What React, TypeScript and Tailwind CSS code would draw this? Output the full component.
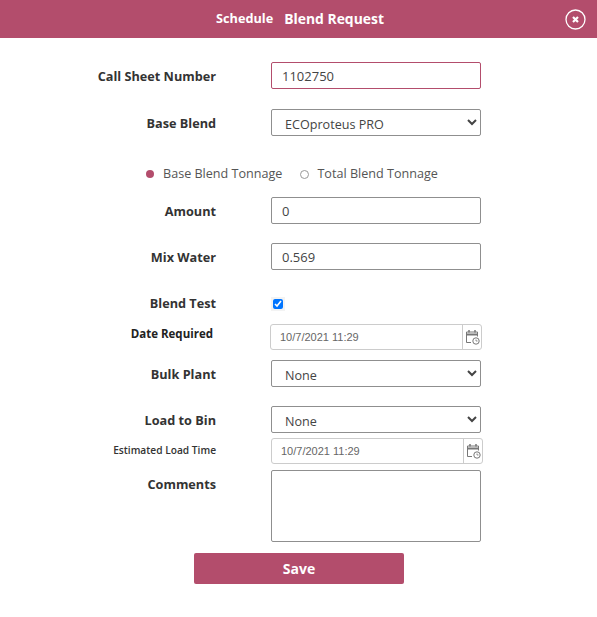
const font = "font-['Open_Sans','Noto_Sans',sans-serif]";

const CalendarIcon = () => (
  <svg width="15" height="16" viewBox="0 0 15 16" fill="none" stroke="#777" strokeWidth="1">
    <path d="M6 13.5H1.5V3H12.5V7.5" />
    <path d="M1.5 5.5H12.5" strokeWidth="2" />
    <path d="M4 1V3.5M10 1V3.5" strokeWidth="1.5" />
    <circle cx="11" cy="12" r="3.2" />
    <path d="M11 10.5V12H12.5" strokeWidth="0.8" />
  </svg>
);

const Label = ({ children, className = "" }: { children: React.ReactNode; className?: string }) => (
  <div className={`w-[216px] shrink-0 pt-[2px] text-right text-[12.7px] font-bold text-[#333] ${className}`}>{children}</div>
);

const TextBox = ({ value, className = "" }: { value: string; className?: string }) => (
  <input
    readOnly
    value={value}
    className={`ml-[55px] h-[27px] w-[210px] rounded-[2px] border border-[#8f8f8f] bg-white pl-[10px] pt-[1px] text-[13px] text-[#444] outline-none ${className}`}
  />
);

const Select = ({ value }: { value: string }) => (
  <select
    defaultValue={value}
    className="ml-[55px] h-[27px] w-[210px] rounded-[2px] border border-[#8f8f8f] bg-white pl-[9px] pt-[3px] text-[12.6px] text-[#444] outline-none"
  >
    <option>{value}</option>
  </select>
);

const DateBox = ({ value, className = "" }: { value: string; className?: string }) => (
  <div className={`flex h-[26px] w-[212px] rounded-[3px] border border-[#ccc] bg-white ${className}`}>
    <div className="flex-1 pl-[9px] font-['Liberation_Sans',sans-serif] text-[11px] leading-[25px] text-[#666]">{value}</div>
    <div className="flex w-[19px] items-center justify-center border-l border-[#ccc]">
      <CalendarIcon />
    </div>
  </div>
);

export default function App() {
  return (
    <div className={`h-[617px] w-[597px] bg-white text-[13px] ${font}`}>
      <div className="relative flex h-[38px] items-center justify-center bg-[#b34d6c] pl-[3px] font-bold text-white">
        <span className="text-[12.7px]">Schedule</span>
        <span className="ml-[11px] text-[13.9px]">Blend Request</span>
        <svg className="absolute right-[11px] top-[9px]" width="21" height="21" viewBox="0 0 21 21" fill="none" stroke="white">
          <circle cx="10.5" cy="10.5" r="9.5" strokeWidth="1.3" />
          <path d="M8 8L13 13M13 8L8 13" strokeWidth="2.2" />
        </svg>
      </div>

      <div className="mt-[24px] flex items-center">
        <Label>Call Sheet Number</Label>
        <TextBox value="1102750" className="!border-[#b34d6c]" />
      </div>
      <div className="mt-[20px] flex items-center">
        <Label>Base Blend</Label>
        <Select value="ECOproteus PRO" />
      </div>

      <div className="mt-[28px] flex h-[20px] items-center pl-[146px] text-[12.6px] text-[#555]">
        <span className="h-[8px] w-[8px] rounded-full bg-[#b34d6c]" />
        <span className="ml-[9px]">Base Blend Tonnage</span>
        <span className="ml-[18px] h-[9px] w-[9px] rounded-full border border-[#999]" />
        <span className="ml-[8px]">Total Blend Tonnage</span>
      </div>

      <div className="mt-[13px] flex items-center">
        <Label>Amount</Label>
        <TextBox value="0" />
      </div>
      <div className="mt-[19px] flex items-center">
        <Label>Mix Water</Label>
        <TextBox value="0.569" />
      </div>

      <div className="mt-[23px] flex h-[20px] items-center">
        <Label>Blend Test</Label>
        <input
          type="checkbox"
          defaultChecked
          className="ml-[57px] mt-[1px] h-[10px] w-[10px] accent-[#0075ff] ring-2 ring-[#f3f3f3]"
        />
      </div>

      <div className="mt-[11px] flex">
        <Label className="!w-[213px] !pt-0 !text-[11.5px] leading-[20px] !text-[#222]">Date Required</Label>
        <DateBox value="10/7/2021 11:29" className="ml-[57px]" />
      </div>
      <div className="mt-[10px] flex items-center">
        <Label>Bulk Plant</Label>
        <Select value="None" />
      </div>
      <div className="mt-[19px] flex items-center">
        <Label>Load to Bin</Label>
        <Select value="None" />
      </div>
      <div className="mt-[5px] flex items-center">
        <Label className="!pt-0 !text-[10.2px] !font-semibold">Estimated Load Time</Label>
        <DateBox value="10/7/2021 11:29" className="ml-[55px]" />
      </div>
      <div className="mt-[6px] flex">
        <Label className="!pt-0 leading-[28px]">Comments</Label>
        <textarea
          readOnly
          className="ml-[55px] h-[72px] w-[210px] resize-none rounded-[2px] border border-[#8f8f8f] bg-white outline-none"
        />
      </div>

      <button className="ml-[194px] mt-[11px] block h-[31px] w-[210px] rounded-[2px] bg-[#b34d6c] text-[14px] font-bold text-white">
        Save
      </button>
    </div>
  );
}
